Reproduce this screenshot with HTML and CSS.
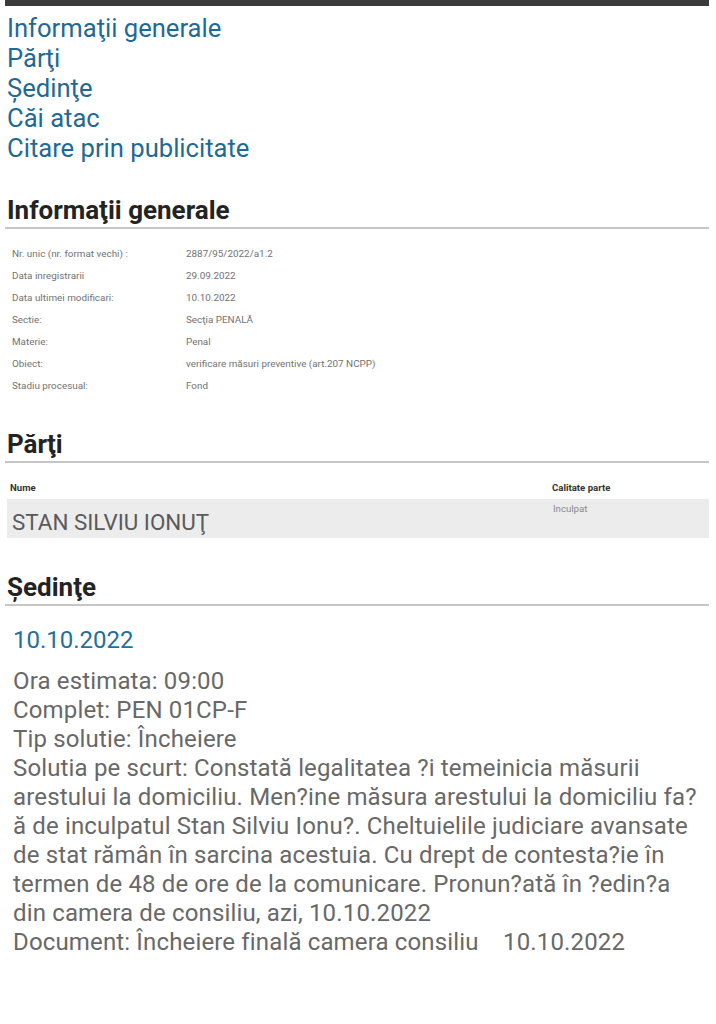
FILE: index.html
```html
<!DOCTYPE html>
<html lang="ro">
<head>
<meta charset="utf-8">
<link rel="stylesheet" href="styles.css">
</head>
<body>
<div class="topbar"></div>
<nav class="nav">
  <a href="#">Informaţii generale</a>
  <a href="#">Părţi</a>
  <a href="#">Şedinţe</a>
  <a href="#">Căi atac</a>
  <a href="#">Citare prin publicitate</a>
</nav>

<section class="sec sec-info">
  <h2 class="sec-title">Informaţii generale</h2>
  <div class="info">
    <div class="info-row"><span class="lbl">Nr. unic (nr. format vechi) :</span><span class="val">2887/95/2022/a1.2</span></div>
    <div class="info-row"><span class="lbl">Data inregistrarii</span><span class="val">29.09.2022</span></div>
    <div class="info-row"><span class="lbl">Data ultimei modificari:</span><span class="val">10.10.2022</span></div>
    <div class="info-row"><span class="lbl">Sectie:</span><span class="val">Secţia PENALĂ</span></div>
    <div class="info-row"><span class="lbl">Materie:</span><span class="val">Penal</span></div>
    <div class="info-row"><span class="lbl">Obiect:</span><span class="val">verificare măsuri preventive (art.207 NCPP)</span></div>
    <div class="info-row"><span class="lbl">Stadiu procesual:</span><span class="val">Fond</span></div>
  </div>
</section>

<section class="sec sec-parti">
  <h2 class="sec-title">Părţi</h2>
  <div class="parti-head"><span class="ph-name">Nume</span><span class="ph-cal">Calitate parte</span></div>
  <div class="parti-row"><span class="pr-name">STAN SILVIU IONUŢ</span><span class="pr-cal">Inculpat</span></div>
</section>

<section class="sec sec-sed">
  <h2 class="sec-title">Şedinţe</h2>
  <div class="sed-date">10.10.2022</div>
  <div class="sed-body">
    <div>Ora estimata: 09:00</div>
    <div>Complet: PEN 01CP-F</div>
    <div>Tip solutie: Încheiere</div>
    <div>Solutia pe scurt: Constată legalitatea ?i temeinicia măsurii arestului la domiciliu. Men?ine măsura arestului la domiciliu fa?ă de inculpatul Stan Silviu Ionu?. Cheltuielile judiciare avansate de stat rămân în sarcina acestuia. Cu drept de contesta?ie în termen de 48 de ore de la comunicare. Pronun?ată în ?edin?a din camera de consiliu, azi, 10.10.2022</div>
    <div>Document: Încheiere finală camera consiliu&nbsp;&nbsp;&nbsp; 10.10.2022</div>
  </div>
</section>
</body>
</html>
```
FILE: styles.css
```css
html, body {
  margin: 0;
  padding: 0;
  background: #ffffff;
}
body {
  font-family: Roboto, "Liberation Sans", sans-serif;
  color: #555;
  width: 716px;
}
.topbar {
  height: 6px;
  margin: 0 7px 0 5px;
  background: #3b3b3b;
}
.nav {
  display: flex;
  flex-direction: column;
  align-items: flex-start;
  padding: 7px 0 0 7px;
}
.nav a {
  color: #1e6a95;
  text-decoration: none;
  font-size: 25.6px;
  line-height: 30px;
}
.sec {
  margin: 0 7px 0 5px;
}
.sec-title {
  margin: 0;
  font-size: 26px;
  font-weight: 700;
  color: #232323;
  line-height: 30px;
  padding: 0 0 2px 2px;
  border-bottom: 2px solid #c6c6c6;
}
.sec-info { padding-top: 32px; }
.info {
  padding: 14px 0 0 7px;
  display: flex;
  flex-direction: column;
}
.info-row {
  display: flex;
  font-size: 9.9px;
  line-height: 22px;
  color: #727272;
}
.lbl { width: 174px; flex: none; }
.sec-parti { padding-top: 32px; }
.parti-head {
  display: flex;
  padding: 17px 0 0 5px;
  margin-bottom: 3px;
  font-size: 9.6px;
  font-weight: 700;
  color: #333;
  line-height: 16px;
}
.ph-name { width: 542px; flex: none; }
.parti-row {
  display: flex;
  margin-left: 2px;
  background: #ececec;
  height: 39px;
  padding-left: 5px;
}
.pr-name {
  width: 541px;
  flex: none;
  font-size: 22.4px;
  color: #5a5a5a;
  line-height: 39px;
  padding-top: 4px;
}
.pr-cal {
  font-size: 9.6px;
  color: #8a8a8a;
  line-height: 20px;
}
.sec-sed { padding-top: 34px; }
.sed-date {
  color: #23709a;
  font-size: 24px;
  line-height: 30px;
  padding: 19px 0 0 8px;
}
.sed-body {
  padding: 12px 0 0 8px;
  font-size: 24px;
  letter-spacing: 0.15px;
  line-height: 29px;
  color: #686868;
}
```
